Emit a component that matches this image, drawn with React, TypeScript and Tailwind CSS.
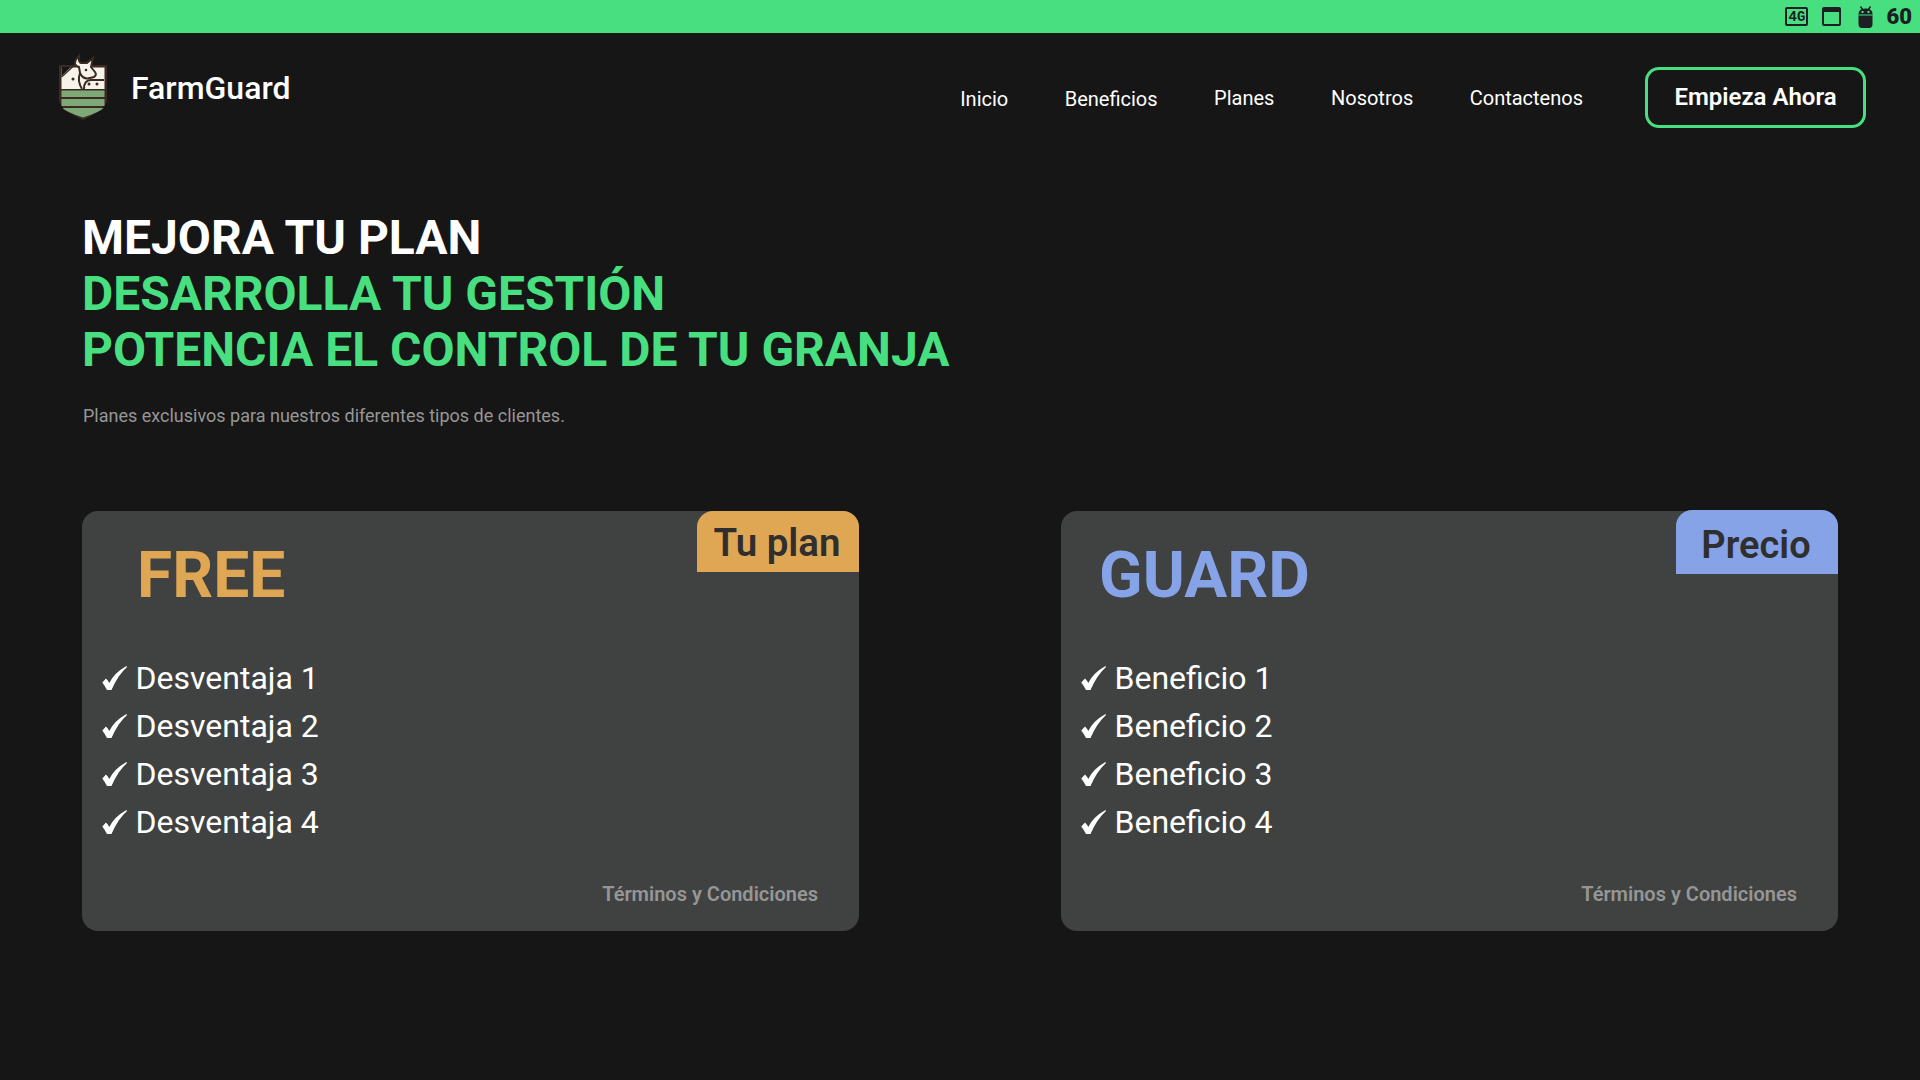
import React from "react";

const navLinks = ["Inicio", "Beneficios", "Planes", "Nosotros", "Contactenos"];

function Logo() {
  return (
    <svg width="50" height="68" viewBox="0 0 50 68" className="block">
      <path d="M1 12 H49 V48 Q47 57 25 67 Q3 57 1 48 Z" fill="#3a2a22" />
      <path d="M3.500 14.500 H46.500 V36 H3.500 Z" fill="#f5f3ea" />
      <path d="M3.500 37.500 H46.500 V44 H3.500 Z" fill="#7fa878" />
      <path d="M3.500 46 H46.500 V53 H3.500 Z" fill="#7fa878" />
      <path d="M4.500 55 H45.500 Q42 59 25 64.500 Q8 59 4.500 55 Z" fill="#7fa878" />
      <path d="M3.500 24 L15 13.500" stroke="#3a2a22" strokeWidth="1.500" fill="none" />
      <path d="M3.500 14 V23 L13 14 Z" fill="#161616" />
      <path d="M19 5 Q14 12 21 14 L22 20 Q25 27 32 25 L36 24 Q39 22 37 19 L33 14 L35 5 L29 10 L23 10 Q20 9 21 3 Z" fill="#f5f3ea" stroke="#3a2a22" strokeWidth="2" />
      <path d="M24 36 Q19 28 22 20" stroke="#3a2a22" strokeWidth="2" fill="none" />
      <path d="M26 36 Q26 27 33 27 L46 27" stroke="#3a2a22" strokeWidth="2" fill="none" />
      <circle cx="15" cy="26" r="1.500" fill="#3a2a22" />
      <circle cx="28" cy="17" r="1.300" fill="#3a2a22" />
      <circle cx="31" cy="31" r="1.500" fill="#3a2a22" />
      <circle cx="39" cy="31" r="1.500" fill="#3a2a22" />
    </svg>
  );
}

function AndroidIcon() {
  return (
    <svg width="15" height="22" viewBox="0 0 15 22" className="block">
      <path d="M2.500 0.500 L4.500 3.500 M12.500 0.500 L10.500 3.500" stroke="#1c1f24" strokeWidth="1.500" />
      <path d="M0.500 8 Q0.500 2.500 7.500 2.500 Q14.500 2.500 14.500 8 V18 Q14.500 22 11 22 H4 Q0.500 22 0.500 18 Z" fill="#1c1f24" />
      <path d="M0.500 9 H14.500" stroke="#47df80" strokeWidth="1" />
      <rect x="3.500" y="5" width="2" height="2" fill="#47df80" />
      <rect x="9.500" y="5" width="2" height="2" fill="#47df80" />
    </svg>
  );
}

function CheckIcon() {
  return (
    <svg width="25" height="26" viewBox="0 -1 25 26" className="block shrink-0 mr-[9px]">
      <path d="M0.300 16.500 L4 12.500 Q6 14.500 7.300 17 Q12 7 24.500 0 L25 1 Q16 9 9.500 24 L5 24 Q3 20 0.300 16.500 Z" fill="#ffffff" />
    </svg>
  );
}

function StatusBar() {
  return (
    <div className="h-[33px] bg-[#47df80] flex items-center justify-end pr-[8px] text-[#1c1f24]">
      <div className="w-[23px] h-[19px] border-2 border-[#1c1f24] rounded-[2px] flex items-center justify-center text-[14px] leading-none font-bold font-['Liberation_Mono',monospace]">
        4G
      </div>
      <div className="ml-[14px] w-[19px] h-[19px] border-2 border-t-[5px] border-[#1c1f24] rounded-[2px]" />
      <div className="ml-[17px]">
        <AndroidIcon />
      </div>
      <span className="ml-[13px] text-[22px] leading-none font-black">60</span>
    </div>
  );
}

function Header() {
  return (
    <header className="h-[114px] flex items-start justify-between pl-[58px] pr-[54px]">
      <div className="flex items-center gap-[23px] pt-[20px]">
        <Logo />
        <span className="text-white text-[32px] font-medium leading-none mt-[2px]">FarmGuard</span>
      </div>
      <nav className="flex items-center pt-[34px]">
        <div className="flex items-center gap-[56.500px] text-white text-[20px] mr-[62px]">
          {navLinks.map((link, i) => (
            <a key={link} className={i < 2 ? "mt-[2px]" : ""}>
              {link}
            </a>
          ))}
        </div>
        <button className="w-[221px] h-[61px] pb-[2px] border-[3px] border-[#47df80] rounded-[14px] text-white text-[24px] font-semibold">
          Empieza Ahora
        </button>
      </nav>
    </header>
  );
}

type PlanProps = {
  name: string;
  nameClass: string;
  nameOffset: string;
  tag: string;
  tagClass: string;
  item: string;
};

function PlanCard({ name, nameClass, nameOffset, tag, tagClass, item }: PlanProps) {
  return (
    <div className="relative w-[777px] h-[420px] bg-[#404241] rounded-[16px] flex flex-col">
      <div className={tagClass}>{tag}</div>
      <h2 className={`text-[64px] leading-none font-bold mt-[33px] ${nameOffset} ${nameClass}`}>{name}</h2>
      <ul className="mt-[46px] pl-[20px] text-white text-[32px] leading-[48px]">
        {[1, 2, 3, 4].map((n) => (
          <li key={n} className="flex items-center">
            <CheckIcon />
            <span className="-ml-[0.500px]">
              {item} {n}
            </span>
          </li>
        ))}
      </ul>
      <a className="mt-auto mb-[22px] self-end mr-[41px] text-[#969696] text-[20px] font-semibold">
        Términos y Condiciones
      </a>
    </div>
  );
}

export default function App() {
  return (
    <div className="w-full h-[1080px] bg-[#161616] overflow-hidden font-['Roboto',sans-serif]">
      <StatusBar />
      <Header />
      <main className="px-[82px]">
        <h1 className="mt-[63px] text-[48px] leading-[56px] font-bold text-[#47df80]">
          <span className="block text-white">MEJORA TU PLAN</span>
          <span className="block">DESARROLLA TU GESTIÓN</span>
          <span className="block">POTENCIA EL CONTROL DE TU GRANJA</span>
        </h1>
        <p className="mt-[26px] ml-[1px] text-[#969696] text-[18px] leading-[24px]">
          Planes exclusivos para nuestros diferentes tipos de clientes.
        </p>
        <div className="mt-[83px] flex gap-[202px]">
          <PlanCard
            name="FREE"
            nameClass="text-[#dfa753]"
            nameOffset="ml-[55px]"
            tag="Tu plan"
            tagClass="absolute top-0 right-0 w-[162px] h-[61px] pt-[2px] pr-[2px] bg-[#dfa753] rounded-t-[16px] flex items-center justify-center text-[#2f2f2f] text-[38.500px] font-semibold"
            item="Desventaja"
          />
          <PlanCard
            name="GUARD"
            nameClass="text-[#86a3e8]"
            nameOffset="ml-[38px]"
            tag="Precio"
            tagClass="absolute -top-px right-0 w-[162px] h-[64px] pt-[6px] pr-[2px] bg-[#86a3e8] rounded-t-[16px] flex items-center justify-center text-[#2f2f2f] text-[38px] font-semibold"
            item="Beneficio"
          />
        </div>
      </main>
    </div>
  );
}
